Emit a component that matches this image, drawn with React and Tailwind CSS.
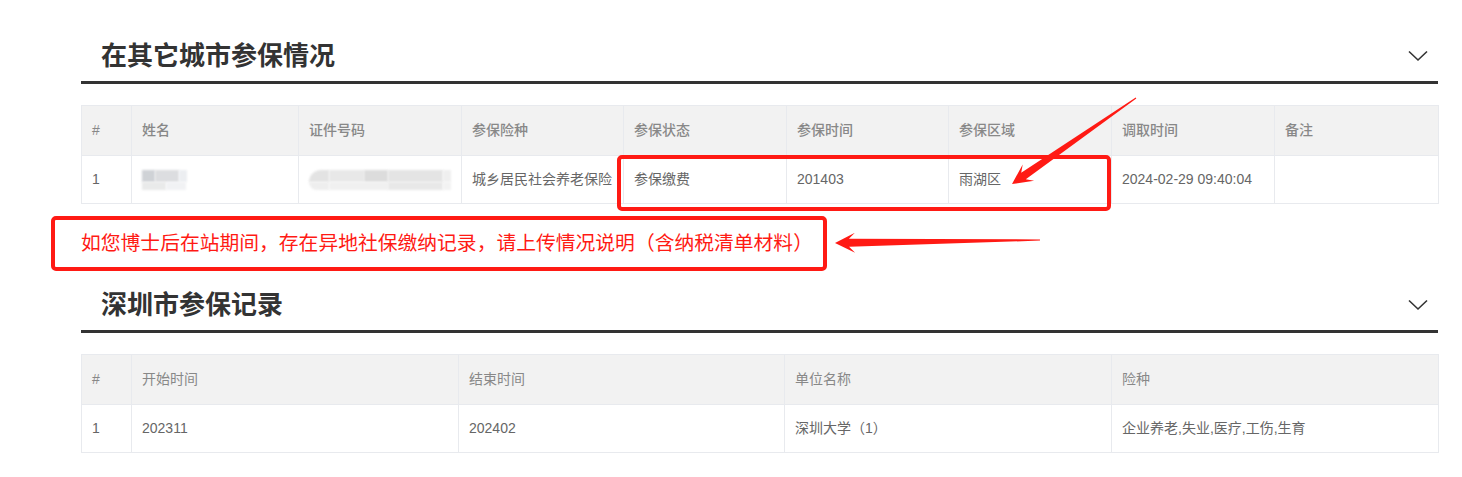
import React from "react";

const font = { fontFamily: '"Liberation Sans", "Noto Sans CJK SC", sans-serif' };

function Chevron() {
  return (
    <svg width="20" height="12" viewBox="0 0 20 12" fill="none">
      <path d="M1 1.5 L10 10 L19 1.5" stroke="#333" strokeWidth="1.6" />
    </svg>
  );
}

function SectionTitle({ title }) {
  return (
    <div className="flex items-center justify-between h-[54px] border-b-[3px] border-[#333] pl-[20px] pr-[10px]">
      <h2 className="text-[26px] font-bold text-[#333] leading-none">{title}</h2>
      <Chevron />
    </div>
  );
}

// tapered arrow, computed from tail and tip
function arrowPoints(tail, tip) {
  const dx = tail[0] - tip[0];
  const dy = tail[1] - tip[1];
  const len = Math.hypot(dx, dy);
  const d = [dx / len, dy / len];
  const n = [-d[1], d[0]];
  const p = (base, a, b) => [base[0] + d[0] * a + n[0] * b, base[1] + d[1] * a + n[1] * b];
  const pts = [
    tip,
    p(tip, 20, 10),
    p(tip, 14, 4),
    p(tail, 0, 0.6),
    p(tail, 0, -0.6),
    p(tip, 14, -4),
    p(tip, 20, -10),
  ];
  return pts.map((q) => q[0].toFixed(1) + "," + q[1].toFixed(1)).join(" ");
}

const th = "h-[50px] px-[10px] text-left font-medium text-[#888] border border-[#e8eaee]";
const td = "h-[48px] px-[10px] text-[#666] border border-[#e8eaee]";

function Blur({ className }) {
  return <div className={"blur-[1px] " + className} />;
}

export default function App() {
  const cols1 = [50, 167, 163, 162, 163, 162, 163, 163, 164];
  const heads1 = ["#", "姓名", "证件号码", "参保险种", "参保状态", "参保时间", "参保区域", "调取时间", "备注"];
  const cols2 = [50, 327, 326, 327, 327];
  const heads2 = ["#", "开始时间", "结束时间", "单位名称", "险种"];

  return (
    <div className="w-[1462px] h-[477px] bg-white relative overflow-hidden" style={font}>
      <div className="ml-[81px] w-[1357px] pt-[30px]">
        <SectionTitle title="在其它城市参保情况" />

        <div className="relative mt-[21px]">
          <table className="w-full table-fixed border-collapse text-[14px]">
            <colgroup>
              {cols1.map((w, i) => (
                <col key={i} style={{ width: w }} />
              ))}
            </colgroup>
            <thead>
              <tr className="bg-[#f2f2f2]">
                {heads1.map((h) => (
                  <th key={h} className={th}>{h}</th>
                ))}
              </tr>
            </thead>
            <tbody>
              <tr>
                <td className={td}>1</td>
                <td className={td}>
                  <div className="flex">
                    <Blur className="w-[13px] h-[12px] bg-[#cfd2d6]" />
                    <Blur className="w-[24px] h-[12px] bg-[#dcdde0]" />
                    <Blur className="w-[8px] h-[12px] bg-[#eceef1]" />
                  </div>
                  <div className="flex">
                    <Blur className="w-[24px] h-[8px] bg-[#e9eaea]" />
                    <Blur className="w-[20px] h-[8px] bg-[#f1f2f4]" />
                  </div>
                </td>
                <td className={td}>
                  <div className="flex">
                    <Blur className="w-[20px] h-[12px] bg-[#e3e3e3] rounded-tl-full" />
                    <Blur className="w-[36px] h-[12px] bg-[#e8e8e8]" />
                    <Blur className="w-[24px] h-[12px] bg-[#dcdcdc]" />
                    <Blur className="w-[56px] h-[12px] bg-[#e4e4e4]" />
                    <Blur className="w-[8px] h-[12px] bg-[#efefef]" />
                  </div>
                  <div className="flex">
                    <Blur className="w-[20px] h-[8px] bg-[#eeeeee] rounded-bl-full" />
                    <Blur className="w-[60px] h-[8px] bg-[#f0f0f0]" />
                    <Blur className="w-[56px] h-[8px] bg-[#e8e8e8]" />
                    <Blur className="w-[8px] h-[8px] bg-[#f2f2f2]" />
                  </div>
                </td>
                <td className={td + " whitespace-nowrap"}>城乡居民社会养老保险</td>
                <td className={td}>参保缴费</td>
                <td className={td}>201403</td>
                <td className={td}>雨湖区</td>
                <td className={td + " whitespace-nowrap"}>2024-02-29 09:40:04</td>
                <td className={td}></td>
              </tr>
            </tbody>
          </table>
          <div className="absolute left-[536px] top-[50px] w-[494px] h-[56px] border-[4px] border-[#ff1a14] rounded-[5px]" />
        </div>

        <div className="mt-[12px] -ml-[30px] w-[776px] h-[55px] border-[4px] border-[#ff1a14] rounded-[5px] flex items-center pl-[26px]">
          <span className="text-[19.8px] text-[#ff1a14] whitespace-nowrap leading-none">
            如您博士后在站期间，存在异地社保缴纳记录，请上传情况说明（含纳税清单材料）
          </span>
        </div>

        <div className="mt-[8px]">
          <SectionTitle title="深圳市参保记录" />
        </div>

        <table className="mt-[21px] w-full table-fixed border-collapse text-[14px]">
          <colgroup>
            {cols2.map((w, i) => (
              <col key={i} style={{ width: w }} />
            ))}
          </colgroup>
          <thead>
            <tr className="bg-[#f2f2f2]">
              {heads2.map((h) => (
                <th key={h} className={th + " font-normal"}>{h}</th>
              ))}
            </tr>
          </thead>
          <tbody>
            <tr>
              <td className={td}>1</td>
              <td className={td}>202311</td>
              <td className={td}>202402</td>
              <td className={td}>深圳大学（1）</td>
              <td className={td}>企业养老,失业,医疗,工伤,生育</td>
            </tr>
          </tbody>
        </table>
      </div>

      <svg className="absolute inset-0 pointer-events-none" width="1462" height="477">
        <polygon points={arrowPoints([1136, 98], [1012, 184])} fill="#ff1a14" />
        <polygon points={arrowPoints([1040, 240], [835, 243])} fill="#ff1a14" />
      </svg>
    </div>
  );
}
